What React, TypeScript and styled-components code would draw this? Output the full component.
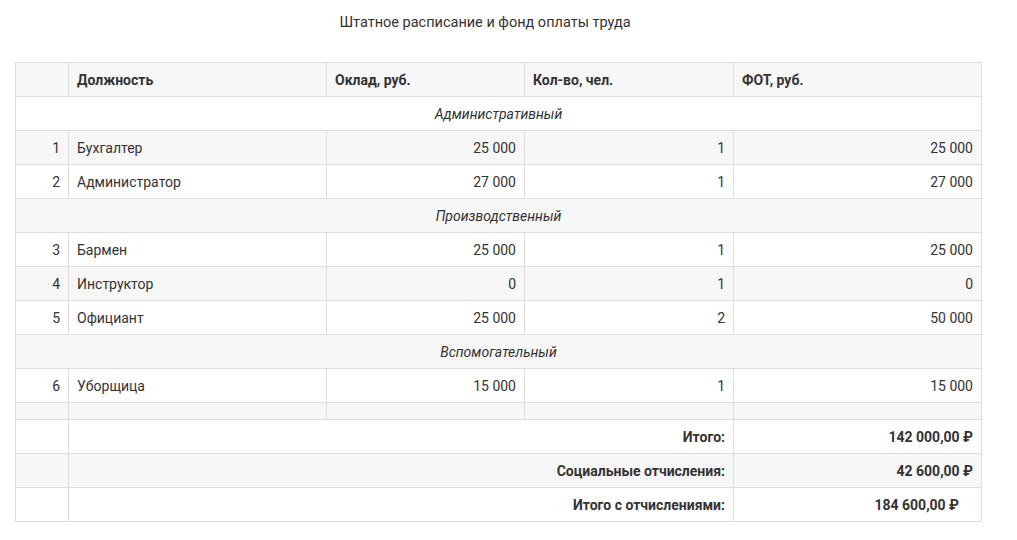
import React from 'react'
import styled, { createGlobalStyle, css } from 'styled-components'

const GlobalStyle = createGlobalStyle`
  body {
    margin: 0;
    background: #fff;
    font-family: Roboto, "Liberation Sans", sans-serif;
    color: #333;
  }
`

type Staff = { n: number; name: string; salary: number; count: number }
type Group = { title: string; rows: Staff[] }

const groups: Group[] = [
  {
    title: 'Административный',
    rows: [
      { n: 1, name: 'Бухгалтер', salary: 25000, count: 1 },
      { n: 2, name: 'Администратор', salary: 27000, count: 1 },
    ],
  },
  {
    title: 'Производственный',
    rows: [
      { n: 3, name: 'Бармен', salary: 25000, count: 1 },
      { n: 4, name: 'Инструктор', salary: 0, count: 1 },
      { n: 5, name: 'Официант', salary: 25000, count: 2 },
    ],
  },
  {
    title: 'Вспомогательный',
    rows: [{ n: 6, name: 'Уборщица', salary: 15000, count: 1 }],
  },
]

const fmt = (v: number) => v.toLocaleString('ru-RU').replace(/\s/g, ' ')

function App() {
  return (
    <Page>
      <GlobalStyle />
      <Title>Штатное расписание и фонд оплаты труда</Title>
      <Table>
        <colgroup>
          <col style={{ width: 53 }} />
          <col style={{ width: 258 }} />
          <col style={{ width: 198 }} />
          <col style={{ width: 209 }} />
          <col style={{ width: 248 }} />
        </colgroup>
        <thead>
          <tr>
            <Th />
            <Th>Должность</Th>
            <Th>Оклад, руб.</Th>
            <Th>Кол-во, чел.</Th>
            <Th>ФОТ, руб.</Th>
          </tr>
        </thead>
        <tbody>
          {groups.map((g) => (
            <React.Fragment key={g.title}>
              <tr>
                <GroupCell colSpan={5}>{g.title}</GroupCell>
              </tr>
              {g.rows.map((r) => (
                <tr key={r.n}>
                  <Td $align="right">{r.n}</Td>
                  <Td>{r.name}</Td>
                  <Td $align="right">{fmt(r.salary)}</Td>
                  <Td $align="right">{r.count}</Td>
                  <Td $align="right">{fmt(r.salary * r.count)}</Td>
                </tr>
              ))}
            </React.Fragment>
          ))}
          <tr>
            <SpacerCell />
            <SpacerCell />
            <SpacerCell />
            <SpacerCell />
            <SpacerCell />
          </tr>
          <tr>
            <Td />
            <Td colSpan={3} $align="right" $bold>
              Итого:
            </Td>
            <Td $align="right" $bold>
              142 000,00 ₽
            </Td>
          </tr>
          <tr>
            <Td />
            <Td colSpan={3} $align="right" $bold>
              Социальные отчисления:
            </Td>
            <Td $align="right" $bold>
              42 600,00 ₽
            </Td>
          </tr>
          <tr>
            <Td />
            <Td colSpan={3} $align="right" $bold>
              Итого с отчислениями:
            </Td>
            <Td $align="right" $bold $extraRight>
              184 600,00 ₽
            </Td>
          </tr>
        </tbody>
      </Table>
    </Page>
  )
}

const Page = styled.div`
  padding: 13px 0 0 15px;
  width: 967px;
`

const Title = styled.div`
  text-align: center;
  font-size: 14.5px;
  line-height: 20px;
  color: #333;
  margin-bottom: 29px;
  padding-right: 27px;
`

const Table = styled.table`
  width: 967px;
  table-layout: fixed;
  border-collapse: collapse;
  font-size: 14px;
  color: #333;

  thead tr {
    background: #f7f7f7;
  }

  tbody tr:nth-child(even) {
    background: #f7f7f7;
  }
`

const cell = css`
  border: 1px solid #dddddd;
  height: 34px;
  padding: 0 8px;
  line-height: 20px;
  box-sizing: border-box;
`

const Th = styled.th`
  ${cell}
  text-align: left;
  font-weight: 700;
`

const Td = styled.td<{ $align?: 'left' | 'right'; $bold?: boolean; $extraRight?: boolean }>`
  ${cell}
  text-align: ${({ $align }) => $align || 'left'};
  font-weight: ${({ $bold }) => ($bold ? 700 : 400)};
  ${({ $extraRight }) =>
    $extraRight &&
    css`
      padding-right: 22px;
    `};
`

const GroupCell = styled.td`
  ${cell}
  text-align: center;
  font-style: italic;
`

const SpacerCell = styled.td`
  border: 1px solid #dddddd;
  height: 16px;
  padding: 0;
`

export default App
